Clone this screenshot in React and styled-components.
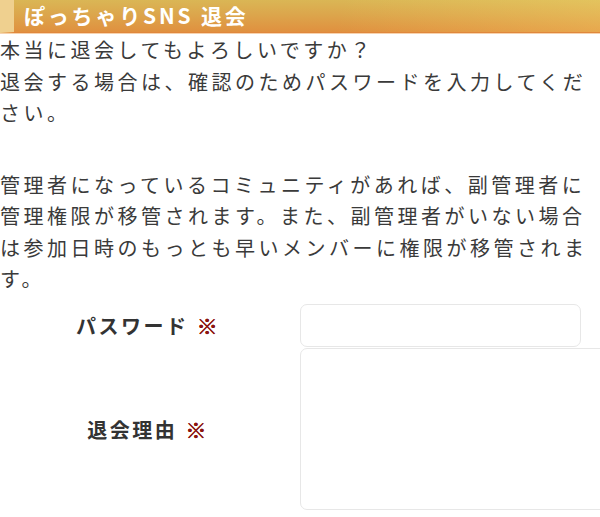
import React from 'react';
import styled, { createGlobalStyle } from 'styled-components';

// Global reset
const GlobalStyle = createGlobalStyle`
  html, body {
    margin: 0;
    padding: 0;
    background: #fff;
  }
  body {
    font-family: "Noto Sans CJK JP", "Noto Sans", sans-serif;
    color: #3a3a3a;
  }
`;

const Page = styled.div`
  width: 600px;
  overflow: hidden;
`;

// Title bar with the pale strip on the left
const Heading = styled.h2`
  margin: 0;
  height: 32px;
  padding-left: 10px;
  border-left: 14px solid #efd08f;
  border-bottom: 1px solid #e0873c;
  box-shadow: 0 1px 0 #f7d3ae;
  background:
    linear-gradient(100deg, rgba(255, 255, 255, 0) 55%, rgba(255, 236, 120, 0.25) 100%),
    linear-gradient(180deg, #dab655 0%, #dca64c 45%, #e0903f 100%);
  color: #fff;
  font-size: 21px;
  font-weight: 700;
  letter-spacing: 2.8px;
  line-height: 31px;
  white-space: nowrap;
`;

const Body = styled.div`
  padding-top: 1px;
  font-size: 20px;
  line-height: 31.5px;
  letter-spacing: 3.5px;
`;

const Para = styled.p`
  margin: 0 0 ${(p) => p.$gap || 0}px;
`;

// Form rows: centred label on the left, field on the right
const Form = styled.div`
  margin-top: 9px;
  display: flex;
  flex-direction: column;
  gap: 1px;
`;

const Row = styled.div`
  display: grid;
  grid-template-columns: 300px 1fr;
  align-items: center;
`;

const Label = styled.label`
  text-align: center;
  font-size: 20px;
  font-weight: 700;
  color: #333;
  letter-spacing: 2.5px;
  padding-right: 4px;
`;

const Req = styled.span`
  color: #8a1610;
  margin-left: 8px;
  font-weight: 700;
  font-size: 21px;
  text-shadow: 0 0 0.6px #8a1610, 0.4px 0 0 #8a1610;
`;

const Field = styled.input`
  box-sizing: border-box;
  width: 281px;
  height: 43px;
  border: 1px solid #e7e7e7;
  border-radius: 7px;
  background: #fff;
  outline: none;
  font: inherit;
`;

const Area = styled.textarea`
  box-sizing: border-box;
  width: 330px;
  height: 162px;
  border: 1px solid #e7e7e7;
  border-radius: 7px;
  background: #fff;
  outline: none;
  resize: none;
  font: inherit;
  display: block;
`;

const App = () => {
  return (
    <Page>
      <GlobalStyle />
      <Heading>ぽっちゃりSNS 退会</Heading>
      <Body>
        <Para $gap={40}>
          本当に退会してもよろしいですか？<br />
          退会する場合は、確認のためパスワードを入力してください。
        </Para>
        <Para>
          管理者になっているコミュニティがあれば、副管理者に管理権限が移管されます。また、副管理者がいない場合は参加日時のもっとも早いメンバーに権限が移管されます。
        </Para>
      </Body>
      <Form>
        <Row>
          <Label>パスワード<Req>※</Req></Label>
          <Field type="password" />
        </Row>
        <Row>
          <Label>退会理由<Req>※</Req></Label>
          <Area />
        </Row>
      </Form>
    </Page>
  );
};

export default App;
